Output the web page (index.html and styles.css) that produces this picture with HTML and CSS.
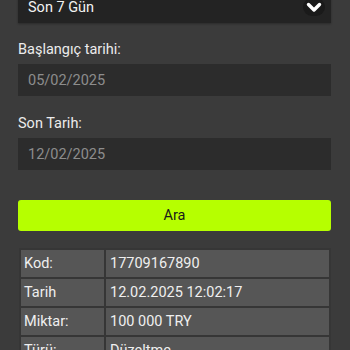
FILE: index.html
```html
<!DOCTYPE html>
<html lang="tr">
<head>
<meta charset="utf-8">
<link rel="stylesheet" href="styles.css">
</head>
<body>
<div class="page">
  <div class="select">
    <span>Son 7 Gün</span>
    <span class="chev"><svg width="16" height="11" viewBox="0 0 16 11"><polyline points="2.5,2.5 8,8 13.5,2.5" fill="none" stroke="#fff" stroke-width="3.4" stroke-linecap="round" stroke-linejoin="round"/></svg></span>
  </div>
  <label class="label">Başlangıç tarihi:</label>
  <div class="input">05/02/2025</div>
  <label class="label">Son Tarih:</label>
  <div class="input">12/02/2025</div>
  <button class="btn">Ara</button>
  <table class="tbl">
    <tr><td class="k">Kod:</td><td>17709167890</td></tr>
    <tr><td class="k">Tarih</td><td>12.02.2025 12:02:17</td></tr>
    <tr><td class="k">Miktar:</td><td>100 000 TRY</td></tr>
    <tr><td class="k">Türü:</td><td>Düzeltme</td></tr>
  </table>
</div>
</body>
</html>
```
FILE: styles.css
```css
html, body { margin: 0; padding: 0; background: #3b3b3b; }
body { font-family: Roboto, "Noto Sans", sans-serif; color: #ececec; font-size: 14.5px; height: 350px; overflow: hidden; }
.page { padding: 0 19px 0 18px; display: flex; flex-direction: column; }
.select {
  margin-top: -9px; height: 32px; background: #232323; display: flex; align-items: center;
  justify-content: space-between; padding: 0 6px 0 10px; font-size: 14.5px; color: #f2f2f2;
  box-shadow: 0 1px 2px rgba(0,0,0,0.3);
}
.chev { width: 22px; height: 18px; border-radius: 9px; background: #1a1a1a; display: flex; align-items: center; justify-content: center; }
.label { display: block; margin-top: 17px; line-height: 20px; height: 20px; margin-bottom: 4px; font-size: 14.5px; color: #ececec; }
.input { height: 32px; background: #2c2c2c; color: #8d8d8d; display: flex; align-items: center; padding-left: 10px; font-size: 14.5px; }
.input + .label { margin-top: 18px; }
.btn {
  margin-top: 30px; height: 31px; border: none; border-radius: 3px; background: #b6ff00;
  font-family: Roboto, sans-serif; font-size: 14.5px; color: #1a1a1a; padding: 0;
}
.tbl { margin-top: 17px; margin-left: 1px; width: 312px; border-collapse: separate; border-spacing: 2px; background: #363636; }
.tbl td { background: #565656; height: 27px; padding: 0 0 0 3px; font-size: 14.5px; color: #efefef; line-height: 27px; }
.tbl td.k { width: 80px; }
.tbl td + td { padding-left: 4px; }
```
